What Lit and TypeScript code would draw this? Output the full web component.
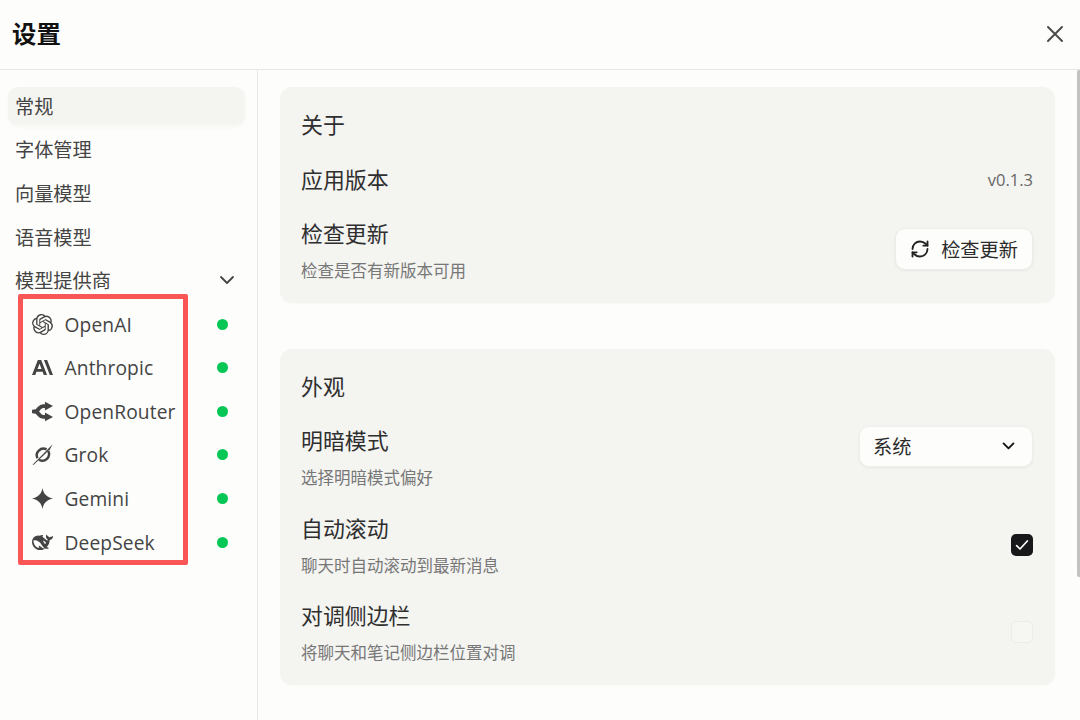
import { LitElement, html, css, svg } from "lit";
import { customElement } from "lit/decorators.js";

const ICONS: Record<string, unknown> = {
  openai: svg`<path fill="currentColor" d="M22.2819 9.8211a5.9847 5.9847 0 0 0-.5157-4.9108 6.0462 6.0462 0 0 0-6.5098-2.9A6.0651 6.0651 0 0 0 4.9807 4.1818a5.9847 5.9847 0 0 0-3.9977 2.9 6.0462 6.0462 0 0 0 .7427 7.0966 5.98 5.98 0 0 0 .511 4.9107 6.051 6.051 0 0 0 6.5146 2.9001A5.9847 5.9847 0 0 0 13.2599 24a6.0557 6.0557 0 0 0 5.7718-4.2058 5.9894 5.9894 0 0 0 3.9977-2.9001 6.0557 6.0557 0 0 0-.7475-7.0729zm-9.022 12.6081a4.4755 4.4755 0 0 1-2.8764-1.0408l.1419-.0804 4.7783-2.7582a.7948.7948 0 0 0 .3927-.6813v-6.7369l2.02 1.1686a.071.071 0 0 1 .038.052v5.5826a4.504 4.504 0 0 1-4.4945 4.4944zm-9.6607-4.1254a4.4708 4.4708 0 0 1-.5346-3.0137l.142.0852 4.783 2.7582a.7712.7712 0 0 0 .7806 0l5.8428-3.3685v2.3324a.0804.0804 0 0 1-.0332.0615L9.74 19.9502a4.4992 4.4992 0 0 1-6.1408-1.6464zM2.3408 7.8956a4.485 4.485 0 0 1 2.3655-1.9728V11.6a.7664.7664 0 0 0 .3879.6765l5.8144 3.3543-2.0201 1.1685a.0757.0757 0 0 1-.071 0l-4.8303-2.7865A4.504 4.504 0 0 1 2.3408 7.872zm16.5963 3.8558L13.1038 8.364 15.1192 7.2a.0757.0757 0 0 1 .071 0l4.8303 2.7913a4.4944 4.4944 0 0 1-.6765 8.1042v-5.6772a.79.79 0 0 0-.407-.667zm2.0107-3.0231l-.142-.0852-4.7735-2.7818a.7759.7759 0 0 0-.7854 0L9.409 9.2297V6.8974a.0662.0662 0 0 1 .0284-.0615l4.8303-2.7866a4.4992 4.4992 0 0 1 6.6802 4.66zM8.3065 12.863l-2.02-1.1638a.0804.0804 0 0 1-.038-.0567V6.0742a4.4992 4.4992 0 0 1 7.3757-3.4537l-.142.0805L8.704 5.459a.7948.7948 0 0 0-.3927.6813zm1.0976-2.3654l2.602-1.4998 2.6069 1.4998v2.9994l-2.5974 1.4997-2.6067-1.4997Z"/>`,
  anthropic: svg`<path fill="currentColor" d="M17.304 3.541h-3.672l6.696 16.918H24Zm-10.608 0L0 20.459h3.744l1.369-3.553h7.005l1.369 3.553h3.744L10.536 3.541Zm-.371 10.223L8.616 7.82l2.291 5.945Z"/>`,
  openrouter: svg`<path fill="none" stroke="currentColor" stroke-width="4.4" stroke-linejoin="round" d="M16 5.8h-3.4c-2 0-3 1-4.4 2.6L6.4 10.4c-.8.9-1.6 1.6-3 1.6s2.2 0 3 1.6l1.8 2c1.4 1.6 2.4 2.6 4.4 2.6H16"/><path fill="none" stroke="currentColor" stroke-width="4" d="M0 12h4"/><path fill="currentColor" d="M24 5.8 14.8.8v10ZM24 18.2l-9.2-5v10Z"/>`,
  grok: svg`<path fill="none" stroke="currentColor" stroke-width="2.8" d="M16.6 6.2A7.6 7.6 0 0 0 6.2 16.2M8 18A7.6 7.6 0 0 0 18.6 8"/><path fill="currentColor" d="M.6 23.8 23.6.4l-3 5.6L2 23.8Z"/>`,
  gemini: svg`<path fill="currentColor" d="M12 0C13 6.6 17.4 11 24 12C17.4 13 13 17.4 12 24C11 17.4 6.6 13 0 12C6.6 11 11 6.6 12 0Z"/>`,
  deepseek: svg`<path fill="currentColor" d="M23.748 4.482c-.254-.124-.364.113-.512.234-.051.039-.094.09-.137.136-.372.397-.806.657-1.373.626-.829-.046-1.537.214-2.163.848-.133-.782-.575-1.248-1.247-1.548-.352-.156-.708-.311-.955-.65-.172-.241-.219-.51-.305-.774-.055-.16-.11-.323-.293-.35-.2-.031-.278.136-.356.276-.313.572-.434 1.202-.422 1.84.027 1.436.633 2.58 1.838 3.393.137.093.172.187.129.323-.082.28-.18.552-.266.833-.055.179-.137.217-.329.14a5.526 5.526 0 01-1.736-1.18c-.857-.828-1.631-1.742-2.597-2.458a11.365 11.365 0 00-.689-.471c-.985-.957.13-1.743.388-1.836.27-.098.093-.432-.779-.428-.872.004-1.67.295-2.687.684a3.055 3.055 0 01-.465.137 9.597 9.597 0 00-2.883-.102c-1.885.21-3.39 1.102-4.497 2.623C.082 8.606-.231 10.684.152 12.85c.403 2.284 1.569 4.175 3.36 5.653 1.858 1.533 3.997 2.284 6.438 2.14 1.482-.085 3.133-.284 4.994-1.86.47.234.962.327 1.78.397.63.059 1.236-.03 1.705-.128.735-.156.684-.837.419-.961-2.155-1.004-1.682-.595-2.113-.926 1.096-1.296 2.746-2.642 3.392-7.003.05-.347.007-.565 0-.845-.004-.17.035-.237.23-.256a4.173 4.173 0 001.545-.475c1.396-.763 1.96-2.015 2.093-3.517.02-.23-.004-.467-.247-.588zM11.581 18c-2.089-1.642-3.102-2.183-3.52-2.16-.392.024-.321.471-.235.763.09.288.207.486.371.739.114.167.192.416-.113.603-.673.416-1.842-.14-1.897-.167-1.361-.802-2.5-1.86-3.301-3.307-.774-1.393-1.224-2.887-1.298-4.482-.02-.386.093-.522.477-.592a4.696 4.696 0 011.529-.039c2.132.312 3.946 1.265 5.468 2.774.868.86 1.525 1.887 2.202 2.891.72 1.066 1.494 2.082 2.48 2.914.348.292.625.514.891.677-.802.09-2.14.11-3.054-.614zm1-6.44a.306.306 0 01.415-.287.302.302 0 01.2.288.306.306 0 01-.31.307.303.303 0 01-.304-.308zm3.11 1.596c-.2.081-.399.151-.59.16a1.245 1.245 0 01-.798-.254c-.274-.23-.47-.358-.552-.758a1.73 1.73 0 01.016-.588c.07-.327-.008-.537-.239-.727-.187-.156-.426-.199-.688-.199a.559.559 0 01-.254-.078c-.11-.054-.2-.19-.114-.358.028-.054.16-.186.192-.21.356-.202.767-.136 1.146.016.352.144.618.408 1.001.782.391.451.462.576.685.914.176.265.336.537.445.848.067.195-.019.354-.25.452z"/>`,
};

const PROVIDERS = [
  ["openai", "OpenAI"],
  ["anthropic", "Anthropic"],
  ["openrouter", "OpenRouter"],
  ["grok", "Grok"],
  ["gemini", "Gemini"],
  ["deepseek", "DeepSeek"],
];

@customElement("app-root")
export class AppRoot extends LitElement {
  static styles = css`
    :host {
      display: flex;
      flex-direction: column;
      position: relative;
      width: 1080px;
      height: 720px;
      overflow: hidden;
      background: #fdfdfb;
      color: #2b2b2b;
      font-family: "Open Sans", "Noto Sans CJK SC", sans-serif;
    }
    .header {
      flex: none;
      height: 69px;
      box-sizing: content-box;
      display: flex;
      align-items: center;
      justify-content: space-between;
      padding: 0 16px 0 12px;
      border-bottom: 1px solid #e6e6e3;
    }
    .title {
      font-size: 24.4px;
      font-weight: 700;
      color: #111;
      line-height: 32px;
      margin-top: -1px;
    }
    .close {
      width: 18px;
      height: 18px;
      color: #4c4c4c;
      margin-top: -1px;
    }
    .body {
      flex: 1;
      display: flex;
      min-height: 0;
    }
    .side {
      flex: none;
      box-sizing: border-box;
      width: 258px;
      padding: 17px 12px 0 8px;
      border-right: 1px solid #e8e8e5;
      display: flex;
      flex-direction: column;
      gap: 6.05px;
    }
    .item {
      height: 37.6px;
      flex: none;
      display: flex;
      align-items: center;
      padding: 0 9px 0 7px;
      border-radius: 10px;
      font-size: 19.2px;
      color: #444;
    }
    .item.active {
      background: #f4f4f1;
      box-shadow: 0 2px 4px rgba(0, 0, 0, 0.03);
    }
    .item .grow {
      flex: 1;
    }
    .chev {
      width: 18px;
      height: 18px;
      color: #444;
    }
    .provider {
      padding: 0 17.5px 0 24px;
      gap: 11.5px;
    }
    .provider .name {
      letter-spacing: 0.12px;
    }
    .provider .logo {
      width: 21px;
      height: 21px;
      color: #444;
      flex: none;
    }
    .dot {
      width: 11px;
      height: 11px;
      border-radius: 50%;
      background: #06c755;
      flex: none;
    }
    .main {
      flex: 1;
      min-width: 0;
      padding: 17px 25px 0 22px;
      display: flex;
      flex-direction: column;
      gap: 46px;
    }
    .card {
      background: #f4f4f1;
      border-radius: 12px;
      padding: 22px 22px 19.5px 21px;
      display: flex;
      flex-direction: column;
      gap: 22.5px;
      box-shadow: 0 1px 3px rgba(0, 0, 0, 0.02);
    }
    .heading,
    .label {
      font-size: 21.9px;
      line-height: 32px;
      color: #2f2f2f;
    }
    .row {
      display: flex;
      justify-content: space-between;
      align-items: center;
    }
    .row.top {
      align-items: flex-start;
    }
    .sub {
      font-size: 16.5px;
      line-height: 24px;
      margin-top: 9px;
      color: #777;
    }
    .version {
      font-size: 16.5px;
      color: #666;
    }
    .btn {
      box-sizing: border-box;
      height: 42px;
      margin-top: 10px;
      width: 138px;
      display: flex;
      align-items: center;
      justify-content: center;
      gap: 11px;
      background: #fdfdfb;
      border: 1px solid #ecece9;
      border-radius: 10px;
      font-size: 19.2px;
      color: #2b2b2b;
      box-shadow: 0 1px 3px rgba(0, 0, 0, 0.06);
    }
    .btn svg {
      width: 20px;
      height: 20px;
      color: #222;
    }
    .select {
      box-sizing: border-box;
      width: 174px;
      height: 41px;
      margin-top: 1px;
      display: flex;
      align-items: center;
      justify-content: space-between;
      padding: 0 15px 2px 13px;
      background: #fdfdfb;
      border: 1px solid #efefec;
      border-radius: 10px;
      font-size: 19.2px;
      color: #2b2b2b;
      box-shadow: 0 1px 3px rgba(0, 0, 0, 0.06);
    }
    .select svg {
      width: 17px;
      height: 17px;
      color: #111;
    }
    .check {
      box-sizing: border-box;
      width: 22px;
      height: 22px;
      border-radius: 5px;
      display: flex;
      align-items: center;
      justify-content: center;
    }
    .check.on {
      background: #18181b;
    }
    .check.on svg {
      width: 16px;
      height: 16px;
      color: #fdfdfb;
    }
    .check.off {
      background: #f6f6f3;
      border: 1px solid #ebebe8;
      margin-top: -2px;
    }
    .annotation {
      position: absolute;
      left: 18px;
      top: 294px;
      width: 170px;
      height: 271px;
      box-sizing: border-box;
      border: 5px solid #f95656;
      border-radius: 2px;
    }
    .scrollbar {
      position: absolute;
      right: 0;
      top: 70px;
      width: 3px;
      height: 507px;
      background: #c2c2c2;
      border-radius: 2px 0 0 2px;
    }
  `;

  render() {
    return html`
      <header class="header">
        <div class="title">设置</div>
        <svg class="close" viewBox="0 0 18 18" fill="none" stroke="currentColor" stroke-width="2" stroke-linecap="round">
          <path d="M2 2 16 16M16 2 2 16" />
        </svg>
      </header>
      <div class="body">
        <nav class="side">
          <div class="item active">常规</div>
          <div class="item">字体管理</div>
          <div class="item">向量模型</div>
          <div class="item">语音模型</div>
          <div class="item">
            <span class="grow">模型提供商</span>
            <svg class="chev" viewBox="0 0 24 24" fill="none" stroke="currentColor" stroke-width="2.4" stroke-linecap="round" stroke-linejoin="round">
              <path d="m4 8 8 8 8-8" />
            </svg>
          </div>
          ${PROVIDERS.map(
            ([id, name]) => html`
              <div class="item provider">
                <svg class="logo" viewBox="0 0 24 24">${ICONS[id]}</svg>
                <span class="grow name">${name}</span>
                <span class="dot"></span>
              </div>
            `
          )}
        </nav>
        <main class="main">
          <section class="card">
            <div class="heading">关于</div>
            <div class="row">
              <div class="label">应用版本</div>
              <div class="version">v0.1.3</div>
            </div>
            <div class="row top">
              <div>
                <div class="label">检查更新</div>
                <div class="sub">检查是否有新版本可用</div>
              </div>
              <div class="btn">
                <svg viewBox="0 0 24 24" fill="none" stroke="currentColor" stroke-width="2.2" stroke-linecap="round" stroke-linejoin="round">
                  <path d="M3 12a9 9 0 0 1 9-9 9.75 9.75 0 0 1 6.74 2.74L21 8" />
                  <path d="M21 3v5h-5" />
                  <path d="M21 12a9 9 0 0 1-9 9 9.75 9.75 0 0 1-6.74-2.74L3 16" />
                  <path d="M8 16H3v5" />
                </svg>
                检查更新
              </div>
            </div>
          </section>
          <section class="card">
            <div class="heading">外观</div>
            <div class="row top">
              <div>
                <div class="label">明暗模式</div>
                <div class="sub">选择明暗模式偏好</div>
              </div>
              <div class="select">
                系统
                <svg viewBox="0 0 24 24" fill="none" stroke="currentColor" stroke-width="2.6" stroke-linecap="round" stroke-linejoin="round">
                  <path d="m5 9 7 7 7-7" />
                </svg>
              </div>
            </div>
            <div class="row">
              <div>
                <div class="label">自动滚动</div>
                <div class="sub">聊天时自动滚动到最新消息</div>
              </div>
              <div class="check on">
                <svg viewBox="0 0 24 24" fill="none" stroke="currentColor" stroke-width="2.6" stroke-linecap="round" stroke-linejoin="round">
                  <path d="M4 13l5 5L20 6" />
                </svg>
              </div>
            </div>
            <div class="row">
              <div>
                <div class="label">对调侧边栏</div>
                <div class="sub">将聊天和笔记侧边栏位置对调</div>
              </div>
              <div class="check off"></div>
            </div>
          </section>
        </main>
      </div>
      <div class="annotation"></div>
      <div class="scrollbar"></div>
    `;
  }
}
